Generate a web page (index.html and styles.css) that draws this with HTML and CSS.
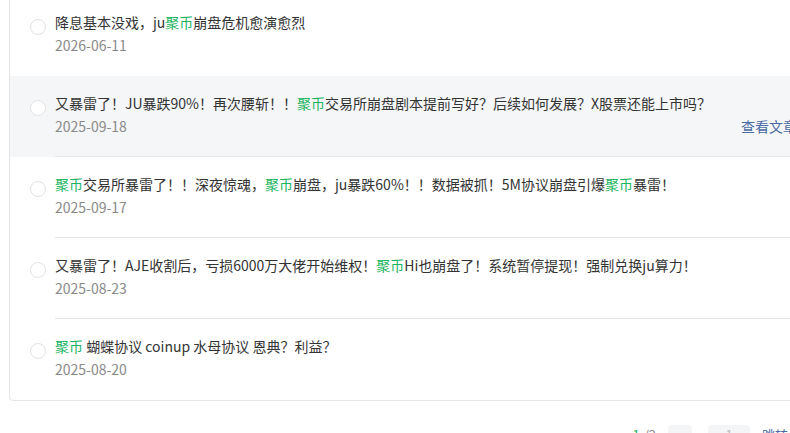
FILE: index.html
```html
<!DOCTYPE html>
<html lang="zh">
<head>
<meta charset="utf-8">
<link rel="stylesheet" href="styles.css">
</head>
<body>
<div class="card">
  <div class="row">
    <span class="dot"></span>
    <div class="body hidden-sep">
      <div class="title">降息基本没戏，ju<em>聚币</em>崩盘危机愈演愈烈</div>
      <div class="meta"><span class="date">2026-06-11</span></div>
    </div>
  </div>
  <div class="row hover">
    <span class="dot"></span>
    <div class="body">
      <div class="title">又暴雷了！JU暴跌90%！再次腰斩！！<em>聚币</em>交易所崩盘剧本提前写好？后续如何发展？X股票还能上市吗？</div>
      <div class="meta"><span class="date">2025-09-18</span><a class="more">查看文章</a></div>
    </div>
  </div>
  <div class="row">
    <span class="dot"></span>
    <div class="body">
      <div class="title"><em>聚币</em>交易所暴雷了！！深夜惊魂，<em>聚币</em>崩盘，ju暴跌60%！！数据被抓！5M协议崩盘引爆<em>聚币</em>暴雷！</div>
      <div class="meta"><span class="date">2025-09-17</span></div>
    </div>
  </div>
  <div class="row">
    <span class="dot"></span>
    <div class="body">
      <div class="title">又暴雷了！AJE收割后，亏损6000万大佬开始维权！<em>聚币</em>Hi也崩盘了！系统暂停提现！强制兑换ju算力！</div>
      <div class="meta"><span class="date">2025-08-23</span></div>
    </div>
  </div>
  <div class="row">
    <span class="dot"></span>
    <div class="body last">
      <div class="title"><em>聚币</em> 蝴蝶协议 coinup 水母协议 恩典？利益？</div>
      <div class="meta"><span class="date">2025-08-20</span></div>
    </div>
  </div>
</div>
<div class="pager">
  <span class="cur">1</span><span class="total">/2</span>
  <span class="btn small">‹</span>
  <span class="btn wide">1</span>
  <span class="jump">跳转</span>
</div>
</body>
</html>
```
FILE: styles.css
```css
html, body {
  margin: 0;
  padding: 0;
  background: #fff;
  overflow: hidden;
  width: 790px;
  height: 433px;
}
body {
  font-family: "Noto Sans CJK SC", "Noto Sans", sans-serif;
  font-size: 14px;
  color: #333;
}
.card {
  margin: -6px 0 0 9px;
  width: 809px;
  box-sizing: border-box;
  border: 1px solid #e6e6e6;
  border-radius: 4px;
  background: #fff;
}
.row {
  display: flex;
  align-items: stretch;
  height: 81px;
  box-sizing: border-box;
  padding: 0 20px 0 20px;
}
.row.hover {
  background: #f5f6f8;
}
.dot {
  flex: none;
  width: 14px;
  height: 14px;
  border: 1px solid #e2e2e2;
  border-radius: 50%;
  background: #fff;
  margin-top: 24px;
  margin-right: 9px;
}
.body {
  flex: 1;
  padding-top: 16px;
  border-bottom: 1px solid #e6e6e6;
  box-sizing: border-box;
}
.body.hidden-sep {
  border-bottom-color: transparent;
}
.body.last {
  border-bottom: none;
}
.title {
  line-height: 22px;
  height: 22px;
  white-space: nowrap;
  color: #333;
}
.title em {
  font-style: normal;
  color: #1bb560;
}
.meta {
  display: flex;
  justify-content: space-between;
  line-height: 22px;
  margin-top: 1px;
}
.date {
  color: #8a8a8a;
}
.more {
  color: #4a6aa6;
  cursor: pointer;
}
.pager {
  display: flex;
  align-items: flex-start;
  justify-content: flex-end;
  height: 28px;
  margin-top: 24px;
  padding-right: 2px;
  font-size: 13px;
  line-height: 20px;
  color: #888;
}
.cur {
  color: #1bb560;
}
.total {
  margin-left: 4px;
  margin-right: 12px;
}
.btn {
  height: 28px;
  background: #f4f5f7;
  border-radius: 3px;
  display: flex;
  align-items: flex-start;
  justify-content: center;
  color: #bbb;
}
.btn.small {
  width: 24px;
  margin-right: 16px;
}
.btn.wide {
  width: 42px;
  margin-right: 12px;
}
.jump {
  color: #4a6aa6;
}
```
